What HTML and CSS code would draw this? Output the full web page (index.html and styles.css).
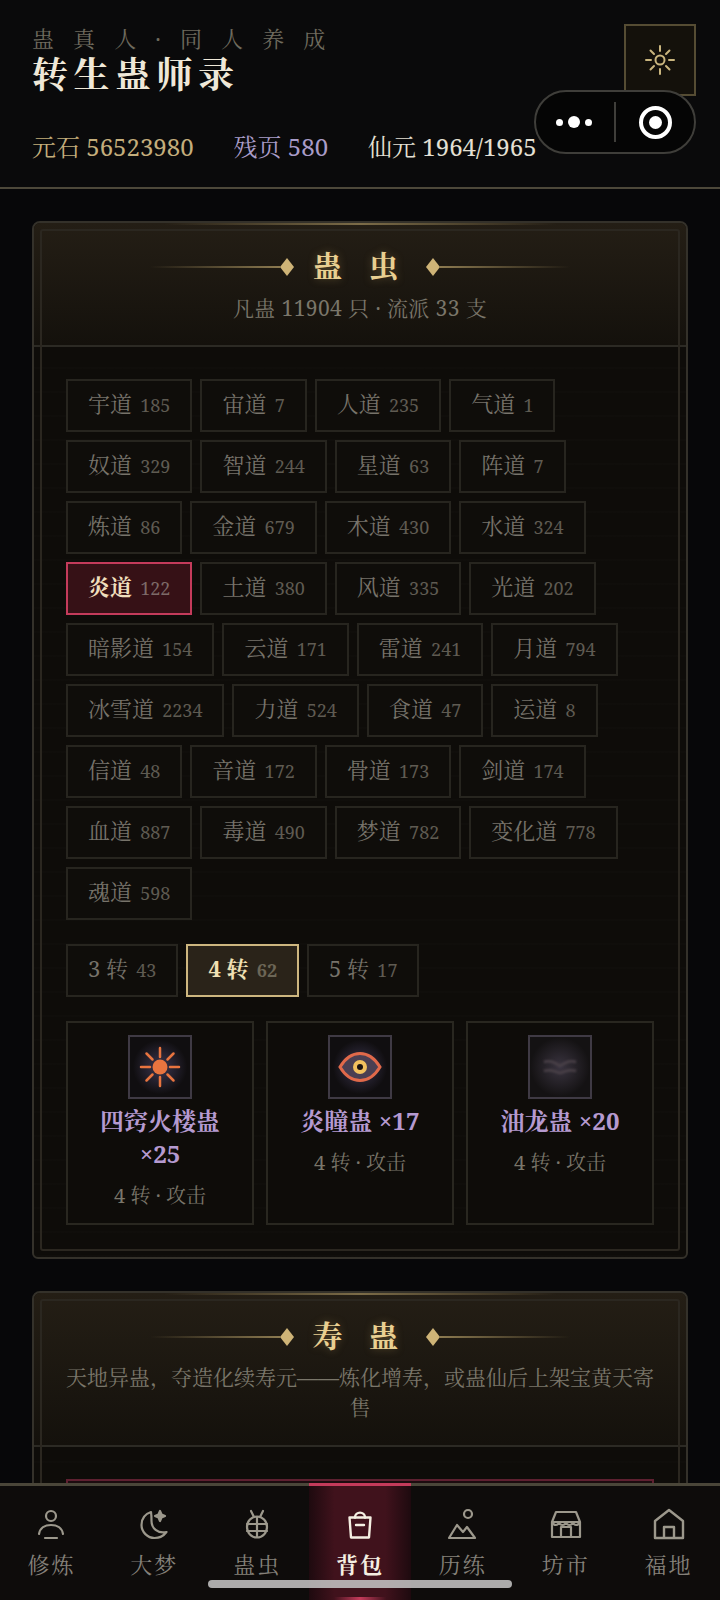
FILE: index.html
```html
<!DOCTYPE html>
<html lang="zh">
<head>
  <meta charset="UTF-8">
  <meta name="viewport" content="width=device-width, initial-scale=1.0">
  <title>转生蛊师录</title>
  <link rel="stylesheet" href="styles.css">
</head>
<body>
  <header class="top">
    <p class="top-sub">蛊 真 人 · 同 人 养 成</p>
    <h1 class="top-title">转生蛊师录</h1>
    <div class="stats">
      <span class="stat-gold">元石 56523980</span>
      <span class="stat-purple">残页 580</span>
      <span class="stat-white">仙元 1964/1965</span>
    </div>
    <button class="gear">
      <svg width="32" height="32" viewBox="0 0 32 32" fill="none" stroke="#c9b57e" stroke-width="2" stroke-linecap="round">
        <circle cx="16" cy="16" r="4.500"/>
        <path d="M16 2v5M16 25v5M2 16h5M25 16h5M6.500 6.500l3.500 3.500M22 22l3.500 3.500M6.500 25.500l3.500-3.500M22 10l3.500-3.500"/>
      </svg>
    </button>
  </header>

  <!-- wechat capsule -->
  <div class="capsule">
    <div class="capsule-dots"><i></i><b></b><i></i></div>
    <div class="capsule-line"></div>
    <div class="capsule-target"><b></b></div>
  </div>

  <main class="content">
    <section class="panel">
      <div class="panel-head">
        <div class="panel-title">
          <span class="rule rule-left"></span><span class="gem"></span>
          <h2>蛊 虫</h2>
          <span class="gem"></span><span class="rule rule-right"></span>
        </div>
        <p class="panel-sub">凡蛊 11904 只 · 流派 33 支</p>
      </div>
      <div class="panel-body">
        <div class="tags">
          <span class="tag">宇道 <em>185</em></span>
          <span class="tag">宙道 <em>7</em></span>
          <span class="tag">人道 <em>235</em></span>
          <span class="tag">气道 <em>1</em></span>
          <span class="tag">奴道 <em>329</em></span>
          <span class="tag">智道 <em>244</em></span>
          <span class="tag">星道 <em>63</em></span>
          <span class="tag">阵道 <em>7</em></span>
          <span class="tag">炼道 <em>86</em></span>
          <span class="tag">金道 <em>679</em></span>
          <span class="tag">木道 <em>430</em></span>
          <span class="tag">水道 <em>324</em></span>
          <span class="tag tag-on">炎道 <em>122</em></span>
          <span class="tag">土道 <em>380</em></span>
          <span class="tag">风道 <em>335</em></span>
          <span class="tag">光道 <em>202</em></span>
          <span class="tag">暗影道 <em>154</em></span>
          <span class="tag">云道 <em>171</em></span>
          <span class="tag">雷道 <em>241</em></span>
          <span class="tag">月道 <em>794</em></span>
          <span class="tag">冰雪道 <em>2234</em></span>
          <span class="tag">力道 <em>524</em></span>
          <span class="tag">食道 <em>47</em></span>
          <span class="tag">运道 <em>8</em></span>
          <span class="tag">信道 <em>48</em></span>
          <span class="tag">音道 <em>172</em></span>
          <span class="tag">骨道 <em>173</em></span>
          <span class="tag">剑道 <em>174</em></span>
          <span class="tag">血道 <em>887</em></span>
          <span class="tag">毒道 <em>490</em></span>
          <span class="tag">梦道 <em>782</em></span>
          <span class="tag">变化道 <em>778</em></span>
          <span class="tag">魂道 <em>598</em></span>
        </div>
        <div class="tags tiers">
          <span class="tag">3 转 <em>43</em></span>
          <span class="tag tag-gold">4 转 <em>62</em></span>
          <span class="tag">5 转 <em>17</em></span>
        </div>
        <div class="gu-grid">
          <div class="gu">
            <div class="gu-icon">
              <svg width="44" height="44" viewBox="0 0 44 44" fill="none" stroke="#e8743f" stroke-width="2.500" stroke-linecap="round">
                <circle cx="22" cy="22" r="7.500" fill="#e8743f" stroke="none"/>
                <path d="M22 3v9M22 32v9M3 22h9M32 22h9M8.500 8.500l6 6M29.500 29.500l6 6M8.500 35.500l6-6M29.500 14.500l6-6"/>
              </svg>
            </div>
            <div class="gu-name">四窍火楼蛊 ×25</div>
            <div class="gu-meta">4 转 · 攻击</div>
          </div>
          <div class="gu">
            <div class="gu-icon">
              <svg width="44" height="44" viewBox="0 0 44 44" fill="none">
                <path d="M2 22C8 12 14 8.500 22 8.500S36 12 42 22C36 32 30 35.500 22 35.500S8 32 2 22Z" stroke="#e0694a" stroke-width="3" fill="#4a3f52"/>
                <circle cx="22" cy="22" r="7" fill="#f2c15e"/>
                <circle cx="22" cy="22" r="3" fill="#1a1210"/>
              </svg>
            </div>
            <div class="gu-name">炎瞳蛊 ×17</div>
            <div class="gu-meta">4 转 · 攻击</div>
          </div>
          <div class="gu">
            <div class="gu-icon gu-icon-dim">
              <svg width="44" height="44" viewBox="0 0 44 44" fill="none" stroke="#4a4148" stroke-width="2.500">
                <path d="M6 17c6-2 10 0 16 4 6-4 10-6 16-4M6 26c6-2 10 0 16 2 6-2 10-4 16-2"/>
              </svg>
            </div>
            <div class="gu-name">油龙蛊 ×20</div>
            <div class="gu-meta">4 转 · 攻击</div>
          </div>
        </div>
      </div>
    </section>

    <section class="panel">
      <div class="panel-head panel-head-tall">
        <div class="panel-title">
          <span class="rule rule-left"></span><span class="gem"></span>
          <h2>寿 蛊</h2>
          <span class="gem"></span><span class="rule rule-right"></span>
        </div>
        <p class="panel-sub panel-sub-long">天地异蛊，夺造化续寿元——炼化增寿，或蛊仙后上架宝黄天寄售</p>
      </div>
      <div class="panel-body">
        <div class="shou-item"></div>
      </div>
    </section>
  </main>

  <nav class="tabbar">
    <a class="tab">
      <svg width="36" height="36" viewBox="0 0 36 36" fill="none" stroke="#9c988c" stroke-width="2.200" stroke-linecap="round">
        <circle cx="18" cy="9" r="5"/>
        <path d="M6 27c1-6 6-9 12-9s11 3 12 9M12 31h12"/>
      </svg>
      <span>修炼</span>
    </a>
    <a class="tab">
      <svg width="36" height="36" viewBox="0 0 36 36" fill="none" stroke="#9c988c" stroke-width="2.200" stroke-linejoin="round">
        <path d="M15 5C9 7 5.500 12 5.500 18c0 7 6 13 13 13 5 0 9-2 12-6-9 2-15-4-15-11 0-3 0-6-.5-9Z"/>
        <path d="M24 4l1.500 3.500L29 9l-3.500 1.500L24 14l-1.500-3.500L19 9l3.500-1.500Z" fill="#9c988c"/>
      </svg>
      <span>大梦</span>
    </a>
    <a class="tab">
      <svg width="36" height="36" viewBox="0 0 36 36" fill="none" stroke="#9c988c" stroke-width="2.200" stroke-linecap="round">
        <ellipse cx="18" cy="20" rx="10" ry="10.500"/>
        <path d="M8 17h20M8 24h20M18 10v20M12 4l3 6M24 4l-3 6"/>
      </svg>
      <span>蛊虫</span>
    </a>
    <a class="tab tab-on">
      <svg width="36" height="36" viewBox="0 0 36 36" fill="none" stroke="#f5efe2" stroke-width="2.400" stroke-linecap="round" stroke-linejoin="round">
        <path d="M7.500 10.500h21L27 30.500H9Z"/>
        <path d="M13 10.500c0-6.500 10-6.500 10 0M14 18h8"/>
      </svg>
      <span>背包</span>
    </a>
    <a class="tab">
      <svg width="36" height="36" viewBox="0 0 36 36" fill="none" stroke="#9c988c" stroke-width="2.200" stroke-linejoin="round">
        <circle cx="23" cy="7" r="4"/>
        <path d="M4 31l8-13 6 7 4-5 8 11Z"/>
      </svg>
      <span>历练</span>
    </a>
    <a class="tab">
      <svg width="36" height="36" viewBox="0 0 36 36" fill="none" stroke="#9c988c" stroke-width="2.200" stroke-linejoin="round">
        <path d="M8 5h20l4 10H4Z"/>
        <path d="M4 15v15h28V15M13 30V20h10v10M4 15c2 4 6 4 7 0 1 4 6 4 7 0 1 4 6 4 7 0 1 4 5 4 7 0"/>
      </svg>
      <span>坊市</span>
    </a>
    <a class="tab">
      <svg width="36" height="36" viewBox="0 0 36 36" fill="none" stroke="#9c988c" stroke-width="2.400" stroke-linejoin="round">
        <path d="M4 14L18 3l14 11v17H4Z"/>
        <path d="M13 31V20h10v11"/>
      </svg>
      <span>福地</span>
    </a>
  </nav>
  <div class="home-bar"></div>
</body>
</html>
```

FILE: styles.css
```css
* {
  box-sizing: border-box;
}
html, body {
  margin: 0;
  height: 1600px;
  overflow: hidden;
}
body {
  background: #070709;
  font-family: "Noto Serif", "Noto Serif CJK SC", "Liberation Serif", serif;
  color: #8a8578;
}
p, h1, h2 {
  margin: 0;
}

/* header */
.top {
  position: relative;
  height: 189px;
  padding: 23px 32px 0;
  background: #0a0a0b;
  border-bottom: 2px solid #4d483a;
}
.top-sub {
  font-size: 22px;
  line-height: 30px;
  letter-spacing: 6.700px;
  color: #6f6b5e;
}
.top-title {
  margin-top: 2px;
  font-size: 36px;
  line-height: 40px;
  letter-spacing: 5.500px;
  color: #efe8d8;
}
.stats {
  display: flex;
  gap: 40px;
  margin-top: 34px;
  font-size: 24px;
  line-height: 36px;
  white-space: nowrap;
}
.stat-gold {
  color: #c4ae7c;
}
.stat-purple {
  color: #a99cc8;
}
.stat-white {
  color: #e4e0d4;
}
.gear {
  position: absolute;
  top: 24px;
  right: 24px;
  width: 72px;
  height: 72px;
  padding: 0;
  display: flex;
  align-items: center;
  justify-content: center;
  background: #14110b;
  border: 2px solid #554c33;
}
.capsule {
  position: absolute;
  top: 90px;
  left: 534px;
  width: 162px;
  height: 64px;
  display: flex;
  align-items: center;
  background: #050505;
  border: 2px solid #3f3e3a;
  border-radius: 32px;
}
.capsule-dots {
  width: 76px;
  margin-right: 2px;
  display: flex;
  align-items: center;
  justify-content: center;
  gap: 5px;
}
.capsule-dots i {
  width: 7px;
  height: 7px;
  border-radius: 50%;
  background: #fff;
}
.capsule-dots b {
  width: 12px;
  height: 12px;
  border-radius: 50%;
  background: #fff;
}
.capsule-line {
  width: 2px;
  height: 40px;
  background: #3f3e3a;
}
.capsule-target {
  width: 33px;
  height: 33px;
  margin-left: 23px;
  display: flex;
  align-items: center;
  justify-content: center;
  border: 4px solid #fff;
  border-radius: 50%;
}
.capsule-target b {
  width: 13px;
  height: 13px;
  border-radius: 50%;
  background: #fff;
}

/* panels */
.content {
  padding: 32px 32px 0;
}
.panel {
  position: relative;
  margin-bottom: 32px;
  padding-bottom: 32px;
  background: repeating-linear-gradient(0deg, rgba(255,255,255,.006) 0 2px, transparent 2px 24px), #0e0c09;
  border: 2px solid #34312a;
  border-radius: 8px 8px 6px 6px;
}
.panel::before {
  content: "";
  position: absolute;
  inset: 6px;
  border: 2px solid #2b2720;
  border-radius: 3px;
  pointer-events: none;
}
.panel::after {
  content: "";
  position: absolute;
  top: 0;
  left: 20%;
  right: 20%;
  height: 2px;
  background: linear-gradient(90deg, transparent, #7c6c48, transparent);
}
.panel-head {
  height: 124px;
  padding-top: 24px;
  background: linear-gradient(180deg, #241e15, #14110c);
  border-bottom: 2px solid #2c2a24;
  border-radius: 6px 6px 0 0;
}
.panel-head-tall {
  height: 154px;
}
.panel-title {
  display: flex;
  align-items: center;
  justify-content: center;
  height: 40px;
}
.panel-title h2 {
  width: 132px;
  margin-bottom: 3px;
  font-size: 30px;
  line-height: 40px;
  letter-spacing: 9px;
  text-align: center;
  color: #e9cf91;
  text-shadow: 0 0 8px rgba(201,170,100,.35);
}
.rule {
  width: 130px;
  height: 2px;
}
.rule-left {
  background: linear-gradient(90deg, transparent, #8c7a50);
}
.rule-right {
  background: linear-gradient(270deg, transparent, #8c7a50);
}
.gem {
  width: 14px;
  height: 18px;
  background: #cfb477;
  clip-path: polygon(50% 0, 100% 50%, 50% 100%, 0 50%);
}
.panel-sub {
  margin-top: 6px;
  font-size: 21px;
  line-height: 30px;
  text-align: center;
  color: #7a766a;
  letter-spacing: .4px;
}
.panel-sub-long {
  margin-top: 5px;
  padding: 0 32px;
  letter-spacing: 0;
}
.panel-body {
  padding: 32px 32px 0;
}

/* tags */
.tags {
  display: flex;
  flex-wrap: wrap;
  gap: 8px;
}
.tag {
  display: block;
  height: 53px;
  padding: 0 20px;
  font-size: 22px;
  line-height: 44px;
  color: #77736a;
  background: #0f0d0a;
  border: 2px solid #27251f;
  white-space: pre;
}
.tag em {
  margin-left: 2.500px;
  font-size: 18px;
  font-style: normal;
  color: #5f5b52;
}
.tag-on {
  font-weight: bold;
  color: #f0dfbd;
  background: #361116;
  border-color: #c43b5b;
}
.tag-on em {
  font-weight: normal;
  color: #7d6a68;
}
.tag-gold {
  font-weight: bold;
  color: #f0e0b4;
  background: #2a2319;
  border-color: #cdb67f;
}
.tag-gold em {
  color: #6c6656;
}
.tiers {
  margin-top: 24px;
}

/* gu cards */
.gu-grid {
  display: grid;
  grid-template-columns: repeat(3, 1fr);
  gap: 12px;
  margin-top: 24px;
}
.gu {
  height: 204px;
  padding: 12px 14px 0;
  text-align: center;
  background: #0e0c09;
  border: 2px solid #292720;
}
.gu-icon {
  width: 64px;
  height: 64px;
  margin: 0 auto;
  display: flex;
  align-items: center;
  justify-content: center;
  background: radial-gradient(circle, #3c3650 0, #100e10 64%);
  border: 2px solid #3f3a44;
}
.gu-icon-dim {
  background: radial-gradient(circle, #3a3440 0, #141213 70%);
}
.gu-icon-dim svg {
  filter: blur(1.200px);
}
.gu-name {
  margin-top: 5px;
  font-size: 24px;
  line-height: 33px;
  font-weight: bold;
  color: #b59ad0;
}
.gu-meta {
  margin-top: 11px;
  font-size: 20px;
  line-height: 30px;
  color: #7a766a;
}
.shou-item {
  height: 120px;
  background: #1c0c0f;
  border: 2px solid #5e2030;
}

/* bottom nav */
.tabbar {
  position: fixed;
  left: 0;
  right: 0;
  bottom: 0;
  height: 117px;
  display: grid;
  grid-template-columns: repeat(7, 1fr);
  background: #0e0c0b;
  border-top: 3px solid #4a4639;
}
.tab {
  display: flex;
  flex-direction: column;
  align-items: center;
  padding-top: 21px;
  font-size: 22px;
  color: #85817a;
  position: relative;
}
.tab span {
  margin-top: 4px;
  line-height: 34px;
  letter-spacing: 2px;
}
.tab-on {
  margin-top: -3px;
  padding-top: 21px;
  color: #f5efe2;
  font-weight: bold;
  background: linear-gradient(90deg, #1e0a0f, #40121c 25%, #40121c 75%, #1e0a0f);
  border-top: 3px solid #c43b5b;
}
.tab-on::after {
  content: "";
  position: absolute;
  left: 25px;
  right: 25px;
  bottom: 0;
  height: 3px;
  background: linear-gradient(90deg, transparent, #c43b5b, transparent);
}
.home-bar {
  position: fixed;
  left: 208px;
  bottom: 12px;
  width: 304px;
  height: 8px;
  border-radius: 4px;
  background: rgba(200,200,200,.85);
}
```
